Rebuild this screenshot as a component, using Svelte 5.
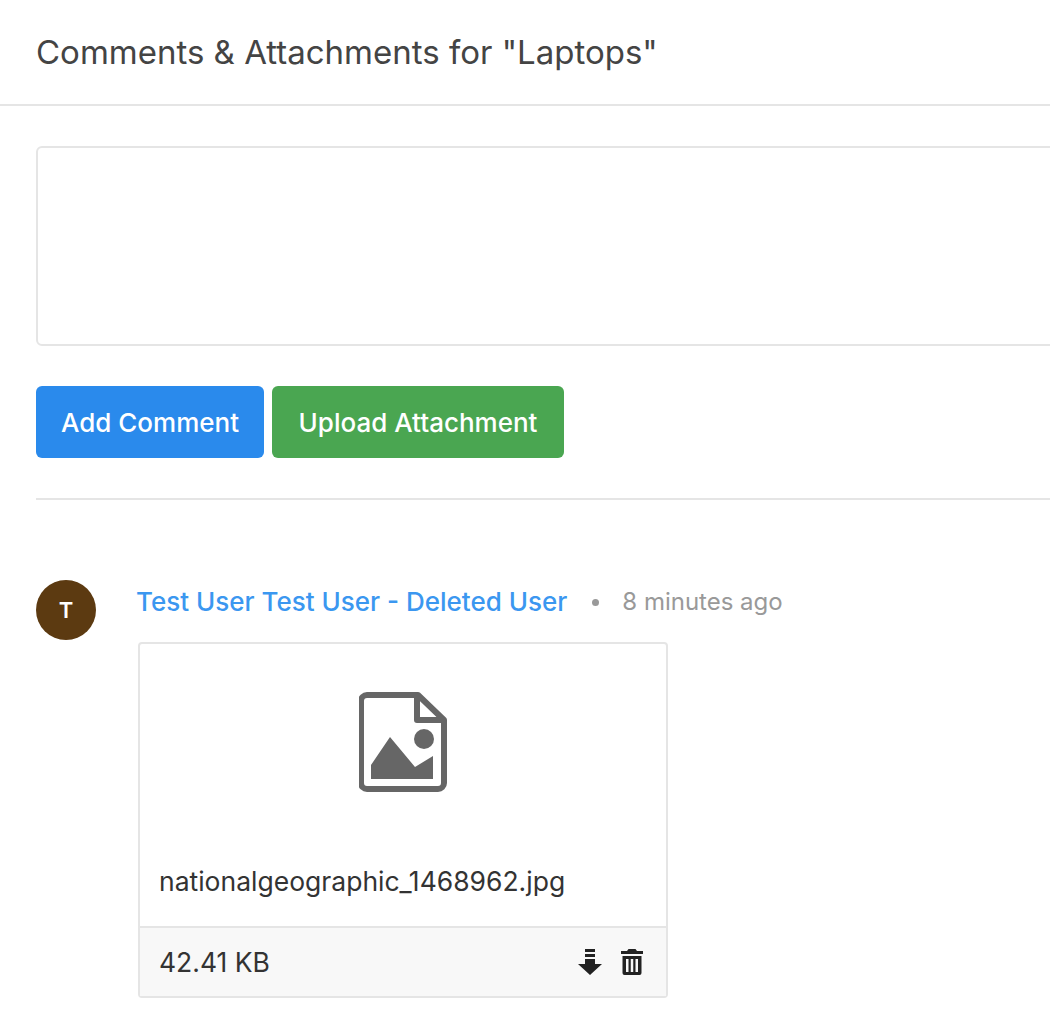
<script>
  let comment = $state("");
</script>

<main>
  <header class="head">
    <h2>Comments &amp; Attachments for "Laptops"</h2>
  </header>

  <section class="body">
    <textarea bind:value={comment}></textarea>

    <div class="actions">
      <button class="btn blue">Add Comment</button>
      <button class="btn green">Upload Attachment</button>
    </div>

    <hr />

    <div class="comment">
      <div class="avatar">T</div>
      <div class="content">
        <div class="meta">
          <a href="#user" class="author">Test User Test User - Deleted User</a>
          <span class="dot"></span>
          <span class="time">8 minutes ago</span>
        </div>

        <div class="card">
          <div class="preview">
            <svg class="file" viewBox="0 0 88 100" width="88" height="100" aria-hidden="true">
              <path
                d="M8 3H59L85 28V91a6 6 0 0 1-6 6H8a6 6 0 0 1-6-6V9a6 6 0 0 1 6-6Z"
                fill="none"
                stroke="#666"
                stroke-width="6"
                stroke-linejoin="round"
              />
              <path d="M58 4V28H84" fill="none" stroke="#666" stroke-width="6" stroke-linejoin="round" />
              <circle cx="65" cy="47" r="10" fill="#666" />
              <path d="M12 87V73L31 45L56 75L74 64V87Z" fill="#666" />
            </svg>
            <div class="name">nationalgeographic_1468962.jpg</div>
          </div>
          <div class="foot">
            <span class="size">42.41 KB</span>
            <span class="tools">
              <svg viewBox="0 0 24 28" width="24" height="28" aria-hidden="true">
                <path d="M7 1h10v3H7ZM7 6h10v3H7ZM7 11h10v5h7L12 27 0 16h7Z" fill="#222" />
              </svg>
              <svg viewBox="0 0 24 28" width="24" height="28" aria-hidden="true">
                <path
                  d="M7 3 8.500 1h7L17 3h6V6H1V3ZM2.500 8h19v17a2 2 0 0 1-2 2h-15a2 2 0 0 1-2-2ZM6 11v13h2.500V11ZM10.750 11v13h2.500V11ZM15.500 11v13H18V11Z"
                  fill="#222"
                  fill-rule="evenodd"
                />
              </svg>
            </span>
          </div>
        </div>
      </div>
    </div>
  </section>
</main>

<style>
  :global(body) {
    margin: 0;
    background: #fff;
    overflow: hidden;
    font-family: Inter, "Liberation Sans", sans-serif;
    color: #333;
  }

  main {
    width: 1050px;
    height: 1018px;
    overflow: hidden;
  }

  .head {
    height: 104px;
    padding-left: 36px;
    display: flex;
    align-items: center;
    border-bottom: 2px solid #e5e5e5;
  }

  h2 {
    margin: 0;
    font-size: 33px;
    font-weight: 400;
    color: #444;
  }

  .body {
    width: 1200px;
    padding: 40px 36px 0;
    box-sizing: border-box;
  }

  textarea {
    display: block;
    width: 100%;
    height: 200px;
    box-sizing: border-box;
    border: 2px solid #e5e5e5;
    border-radius: 6px;
    outline: none;
    resize: none;
  }

  .actions {
    display: flex;
    gap: 8px;
    margin-top: 40px;
  }

  .btn {
    height: 72px;
    border: 0;
    border-radius: 6px;
    color: #fff;
    font-family: inherit;
    font-size: 26px;
    font-weight: 500;
    padding: 0;
  }

  .blue {
    width: 228px;
    background: #2a8aec;
  }

  .green {
    width: 292px;
    background: #4aa651;
  }

  hr {
    margin: 40px 0 0;
    border: 0;
    border-top: 2px solid #e5e5e5;
  }

  .comment {
    display: flex;
    gap: 40px;
    margin-top: 80px;
  }

  .avatar {
    flex: none;
    width: 60px;
    height: 60px;
    border-radius: 50%;
    background: #5c3a11;
    color: #fff;
    font-size: 22px;
    font-weight: 600;
    display: flex;
    align-items: center;
    justify-content: center;
  }

  .content {
    width: 680px;
  }

  .meta {
    display: flex;
    align-items: center;
    height: 42px;
    margin-bottom: 20px;
    white-space: nowrap;
  }

  .author {
    color: #3b97f0;
    font-size: 26px;
    font-weight: 500;
    text-decoration: none;
  }

  .dot {
    flex: none;
    width: 7px;
    height: 7px;
    border-radius: 50%;
    background: #999;
    margin: 2px 23px 0 25px;
  }

  .time {
    color: #999;
    font-size: 24px;
  }

  .card {
    width: 530px;
    height: 356px;
    margin-left: 2px;
    box-sizing: border-box;
    border: 2px solid #e5e5e5;
    border-radius: 4px;
    display: flex;
    flex-direction: column;
  }

  .preview {
    flex: 1;
    display: flex;
    flex-direction: column;
    align-items: center;
    padding-top: 48px;
  }

  .file {
    display: block;
  }

  .name {
    align-self: flex-start;
    margin: 73px 0 0 19px;
    font-size: 26.5px;
    color: #333;
  }

  .foot {
    height: 70px;
    box-sizing: border-box;
    border-top: 2px solid #e5e5e5;
    background: #f8f8f8;
    display: flex;
    align-items: center;
    justify-content: space-between;
    padding: 0 22px 0 19px;
  }

  .size {
    font-size: 26.5px;
    color: #333;
  }

  .tools {
    display: flex;
    gap: 18px;
  }
</style>
